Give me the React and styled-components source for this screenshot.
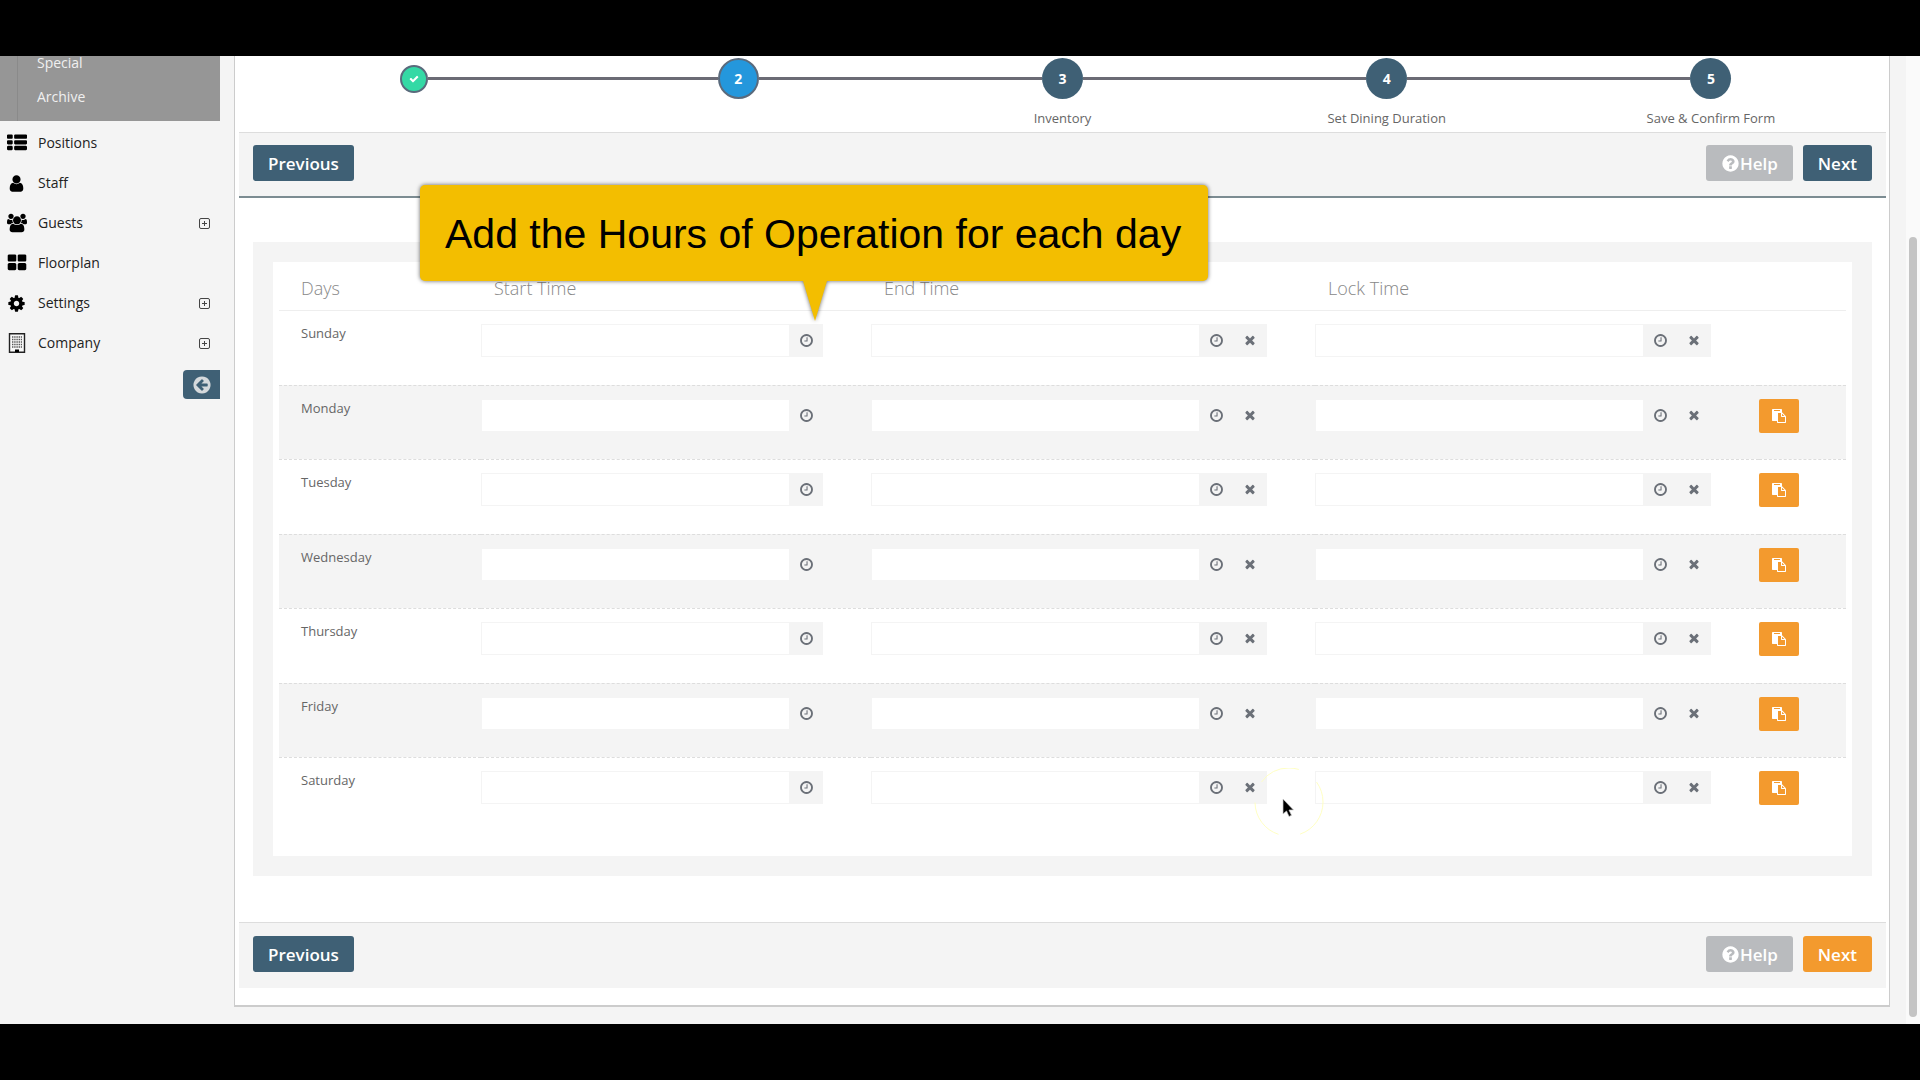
import { Fragment } from "react";
import styled, { createGlobalStyle } from "styled-components";

const CIRCLE =
  "M1664 896q0 209-103 385.5t-279.5 279.5-385.5 103-385.5-103-279.5-279.5-103-385.5 103-385.5 279.5-279.5 385.5-103 385.5 103 279.5 279.5 103 385.5z";

const PATHS = {
  list: "M512 1248v192q0 40-28 68t-68 28h-320q-40 0-68-28t-28-68v-192q0-40 28-68t68-28h320q40 0 68 28t28 68zm0-512v192q0 40-28 68t-68 28h-320q-40 0-68-28t-28-68v-192q0-40 28-68t68-28h320q40 0 68 28t28 68zm1280 512v192q0 40-28 68t-68 28h-960q-40 0-68-28t-28-68v-192q0-40 28-68t68-28h960q40 0 68 28t28 68zm-1280-1024v192q0 40-28 68t-68 28h-320q-40 0-68-28t-28-68v-192q0-40 28-68t68-28h320q40 0 68 28t28 68zm1280 512v192q0 40-28 68t-68 28h-960q-40 0-68-28t-28-68v-192q0-40 28-68t68-28h960q40 0 68 28t28 68zm0-512v192q0 40-28 68t-68 28h-960q-40 0-68-28t-28-68v-192q0-40 28-68t68-28h960q40 0 68 28t28 68z",
  user: "M1536 1399q0 109-62.5 187t-150.5 78h-854q-88 0-150.5-78t-62.5-187q0-85 8.5-160.5t31.5-152 58.5-131 94-89 134.5-34.5q131 128 313 128t313-128q76 0 134.5 34.5t94 89 58.5 131 31.5 152 8.5 160.5zm-256-887q0 159-112.5 271.5t-271.5 112.5-271.5-112.5-112.5-271.5 112.5-271.5 271.5-112.5 271.5 112.5 112.5 271.5z",
  users:
    "M593 896q-162 5-265 128h-134q-82 0-138-40.5t-56-118.5q0-353 124-353 6 0 43.5 21t97.5 42.5 119 21.5q67 0 133-23-5 37-5 66 0 139 81 256zm1071 637q0 120-73 189.5t-194 69.5h-874q-121 0-194-69.5t-73-189.5q0-53 3.5-103.5t14-109 26.5-108.5 43-97.5 62-81 85.5-53.5 111.5-20q10 0 43 21.5t73 48 107 48 135 21.5 135-21.5 107-48 73-48 43-21.5q61 0 111.5 20t85.5 53.5 62 81 43 97.5 26.5 108.5 14 109 3.5 103.5zm-1024-1277q0 106-75 181t-181 75-181-75-75-181 75-181 181-75 181 75 75 181zm704 384q0 159-112.5 271.5t-271.5 112.5-271.5-112.5-112.5-271.5 112.5-271.5 271.5-112.5 271.5 112.5 112.5 271.5zm576 225q0 78-56 118.5t-138 40.5h-134q-103-123-265-128 81-117 81-256 0-29-5-66 66 23 133 23 59 0 119-21.5t97.5-42.5 43.5-21q124 0 124 353zm-128-609q0 106-75 181t-181 75-181-75-75-181 75-181 181-75 181 75 75 181z",
  grid: "M832 1024v384q0 52-38 90t-90 38h-512q-52 0-90-38t-38-90v-384q0-52 38-90t90-38h512q52 0 90 38t38 90zm0-768v384q0 52-38 90t-90 38h-512q-52 0-90-38t-38-90v-384q0-52 38-90t90-38h512q52 0 90 38t38 90zm896 768v384q0 52-38 90t-90 38h-512q-52 0-90-38t-38-90v-384q0-52 38-90t90-38h512q52 0 90 38t38 90zm0-768v384q0 52-38 90t-90 38h-512q-52 0-90-38t-38-90v-384q0-52 38-90t90-38h512q52 0 90 38t38 90z",
  cog: "M1152 896q0-106-75-181t-181-75-181 75-75 181 75 181 181 75 181-75 75-181zm512-109v222q0 12-8 23t-20 13l-185 28q-19 54-39 91 35 50 107 138 10 12 10 25t-9 23q-27 37-99 108t-94 71q-12 0-26-9l-138-108q-44 23-91 38-16 136-29 186-7 28-36 28h-222q-14 0-24.5-8.5t-11.5-21.5l-28-184q-49-16-90-37l-141 107q-10 9-25 9-14 0-25-11-126-114-165-168-7-10-7-23 0-12 8-23 15-21 51-66.5t54-70.5q-27-50-41-99l-183-27q-13-2-21-12.5t-8-23.5v-222q0-12 8-23t19-13l186-28q14-46 39-92-40-57-107-138-10-12-10-24 0-10 9-23 26-36 98.5-107.5t94.5-71.5q13 0 26 10l138 107q44-23 91-38 16-136 29-186 7-28 36-28h222q14 0 24.5 8.5t11.5 21.5l28 184q49 16 90 37l142-107q9-9 24-9 13 0 25 10 129 119 165 170 7 8 7 22 0 12-8 23-15 21-51 66.5t-54 70.5q26 50 41 98l183 28q13 2 21 12.5t8 23.5z",
  clock:
    "M1024 544v448q0 14-9 23t-23 9h-320q-14 0-23-9t-9-23v-64q0-14 9-23t23-9h224v-352q0-14 9-23t23-9h64q14 0 23 9t9 23zm416 352q0-148-73-273t-198-198-273-73-273 73-198 198-73 273 73 273 198 198 273 73 273-73 198-198 73-273z" +
    CIRCLE,
  times:
    "M1490 1322q0 40-28 68l-136 136q-28 28-68 28t-68-28l-294-294-294 294q-28 28-68 28t-68-28l-136-136q-28-28-28-68t28-68l294-294-294-294q-28-28-28-68t28-68l136-136q28-28 68-28t68 28l294 294 294-294q28-28 68-28t68 28l136 136q28 28 28 68t-28 68l-294 294 294 294q28 28 28 68z",
  paste:
    "M768 1664h896v-640h-416q-40 0-68-28t-28-68v-416h-384v1152zm256-1440v-64q0-13-9.5-22.5t-22.5-9.5h-704q-13 0-22.5 9.5t-9.5 22.5v64q0 13 9.5 22.5t22.5 9.5h704q13 0 22.5-9.5t9.5-22.5zm256 672h299l-299-299v299zm512 128v672q0 40-28 68t-68 28h-960q-40 0-68-28t-28-68v-160h-544q-40 0-68-28t-28-68v-1344q0-40 28-68t68-28h1088q40 0 68 28t28 68v328q21 13 36 28l408 408q28 28 48 76t20 88z",
  help:
    "M1024 1376v-192q0-14-9-23t-23-9h-192q-14 0-23 9t-9 23v192q0 14 9 23t23 9h192q14 0 23-9t9-23zm256-672q0-88-55.5-163t-138.5-116-170-41q-243 0-371 213-15 24 8 42l132 100q7 6 19 6 16 0 25-12 53-68 86-92 34-24 86-24 48 0 85.5 26t37.5 59q0 38-20 61t-68 45q-63 28-115.5 86.5t-52.5 125.5v36q0 14 9 23t23 9h192q14 0 23-9t9-23q0-19 21.5-49.5t54.5-49.5q32-18 49-28.5t46-35 44.5-48 28-60.5 12.5-81z" +
    CIRCLE,
  back:
    "M1408 960v-128q0-26-19-45t-45-19h-502l189-189q19-19 19-45t-19-45l-91-91q-18-18-45-18t-45 18l-362 362-91 91q-18 18-18 45t18 45l91 91 362 362q18 18 45 18t45-18l91-91q18-18 18-45t-18-45l-189-189h502q26 0 45-19t19-45z" +
    CIRCLE,
  check:
    "M1671 566q0 40-28 68l-724 724-136 136q-28 28-68 28t-68-28l-136-136-362-362q-28-28-28-68t28-68l136-136q28-28 68-28t68 28l294 295 656-657q28-28 68-28t68 28l136 136q28 28 28 68z",
};

const Icon = ({ name, size }) => (
  <svg
    width={size}
    height={size}
    viewBox={name === "users" ? "0 0 1920 1792" : "0 0 1792 1792"}
    fill="currentColor"
    fillRule="evenodd"
    aria-hidden="true"
  >
    <path d={PATHS[name]} />
  </svg>
);

const BuildingIcon = () => (
  <svg width="18" height="20" viewBox="0 0 18 20" aria-hidden="true">
    <path d="M1.500 0.700h15v18.600h-15z" fill="#f8f8f8" stroke="#222" strokeWidth="1.400" />
    <path
      d="M4 4h10M4 6.500h10M4 9h10M4 11.500h10M4 14h10"
      stroke="#555"
      strokeWidth="1.400"
      strokeDasharray="1.400 0.800"
    />
    <path d="M7 16.500h4V19H7z" fill="#000" />
  </svg>
);

const ExpandIcon = () => (
  <svg width="11" height="11" viewBox="0 0 11 11" fill="none" stroke="#444">
    <rect x="0.500" y="0.500" width="10" height="10" rx="1.500" />
    <path d="M5.500 3v5M3 5.500h5" />
  </svg>
);

const menu = [
  { label: "Positions", icon: "list", size: 20 },
  { label: "Staff", icon: "user", size: 19 },
  { label: "Guests", icon: "users", size: 20, expand: true },
  { label: "Floorplan", icon: "grid", size: 20 },
  { label: "Settings", icon: "cog", size: 19, expand: true },
  { label: "Company", expand: true },
];

const steps = [
  { state: "done" },
  { number: 2, state: "active" },
  { number: 3, label: "Inventory" },
  { number: 4, label: "Set Dining Duration" },
  { number: 5, label: "Save & Confirm Form" },
];

const days = [
  "Sunday",
  "Monday",
  "Tuesday",
  "Wednesday",
  "Thursday",
  "Friday",
  "Saturday",
];

const Sidebar = () => (
  <Side>
    <SubMenu>
      <SubLink href="#special">Special</SubLink>
      <SubLink href="#archive">Archive</SubLink>
    </SubMenu>
    <Menu>
      {menu.map(({ label, icon, size, expand }) => (
        <MenuLink key={label} href={`#${label.toLowerCase()}`}>
          <MenuIcon>
            {icon ? <Icon name={icon} size={size} /> : <BuildingIcon />}
          </MenuIcon>
          <MenuLabel>{label}</MenuLabel>
          {expand && <ExpandIcon />}
        </MenuLink>
      ))}
    </Menu>
    <Collapse type="button" aria-label="Collapse menu">
      <Icon name="back" size={20} />
    </Collapse>
  </Side>
);

const Stepper = () => (
  <Steps>
    {steps.map(({ number, label, state }, i) => (
      <Step key={i}>
        <StepTrack>
          <StepLine $hidden={i === 0} />
          <StepDot $state={state}>
            {number || <Icon name="check" size={10} />}
          </StepDot>
          <StepLine $hidden={i === steps.length - 1} />
        </StepTrack>
        {label && <StepLabel>{label}</StepLabel>}
      </Step>
    ))}
  </Steps>
);

const Actions = ({ bottom }) => (
  <Toolbar $bottom={bottom}>
    <Button type="button">Previous</Button>
    <ButtonGroup>
      <Button type="button" $color="#b9bbbe">
        <Icon name="help" size={19} />
        Help
      </Button>
      <Button type="button" $color={bottom && "#f39a2e"}>
        Next
      </Button>
    </ButtonGroup>
  </Toolbar>
);

const TimeField = ({ label, clearable }) => (
  <Field>
    <TimeInput type="text" aria-label={label} />
    <Addon>
      <AddonButton type="button" aria-label={`Pick ${label}`}>
        <Icon name="clock" size={15} />
      </AddonButton>
      {clearable && (
        <AddonButton type="button" aria-label={`Clear ${label}`}>
          <Icon name="times" size={14} />
        </AddonButton>
      )}
    </Addon>
  </Field>
);

const HoursTable = () => (
  <Table>
    <colgroup>
      <Col $width={202} />
      <Col $width={390} />
      <Col />
      <Col />
      <Col $width={87} />
    </colgroup>
    <thead>
      <tr>
        <Head $first>Days</Head>
        <Head>Start Time</Head>
        <Head>End Time</Head>
        <Head>Lock Time</Head>
        <Head as="td" />
      </tr>
    </thead>
    <tbody>
      {days.map((day, i) => (
        <Row key={day}>
          <DayName scope="row">{day}</DayName>
          <Cell>
            <TimeField label={`${day} start time`} />
          </Cell>
          <Cell>
            <TimeField label={`${day} end time`} clearable />
          </Cell>
          <Cell>
            <TimeField label={`${day} lock time`} clearable />
          </Cell>
          <Cell>
            {i > 0 && (
              <CopyButton type="button" aria-label={`Copy to ${day}`}>
                <Icon name="paste" size={14} />
              </CopyButton>
            )}
          </Cell>
        </Row>
      ))}
    </tbody>
  </Table>
);

const App = () => {
  return (
    <Fragment>
      <GlobalStyle />
      <Page>
        <Sidebar />
        <Main>
          <Panel>
            <Stepper />
            <Actions />
            <Frame>
              <HoursTable />
            </Frame>
            <Actions bottom />
          </Panel>
        </Main>
        <ScrollTrack>
          <ScrollThumb />
        </ScrollTrack>
        <Callout>Add the Hours of Operation for each day</Callout>
        <Pointer>
          <svg width="72" height="72" viewBox="0 0 72 72">
            <circle
              cx="36"
              cy="34"
              r="34"
              fill="none"
              stroke="#ffffc4"
              strokeDasharray="42 22"
            />
            <path
              d="M30 31v15l3.500-3 2.500 5.500 2.500-1.200-2.500-5.300h4.500z"
              fill="#000"
              stroke="#ccc"
              strokeWidth="0.700"
            />
          </svg>
        </Pointer>
      </Page>
    </Fragment>
  );
};

const GlobalStyle = createGlobalStyle`
  * {
    box-sizing: border-box;
  }
  body {
    margin: 0;
    background: #000;
    font-family: "Open Sans", "Noto Sans", sans-serif;
    font-size: 14px;
    line-height: 20px;
    color: #666;
  }
  button, input {
    font-family: inherit;
  }
  svg {
    display: block;
    flex: none;
  }
`;

const Page = styled.div`
  position: relative;
  display: flex;
  min-height: 100vh;
  border: solid #000;
  border-width: 56px 0;
  background: #f4f4f4;
`;
const Side = styled.aside`
  width: 220px;
  display: flex;
  flex-direction: column;
`;
const SubMenu = styled.nav`
  display: flex;
  flex-direction: column;
  height: 65px;
  padding-left: 17px;
  background: #969696;
`;
const SubLink = styled.a`
  flex: none;
  height: 34px;
  padding-left: 19px;
  border-left: 1px solid #8a8a8a;
  line-height: 14px;
  color: #f0f0f0;
  text-decoration: none;
  &:last-child {
    height: 31px;
  }
`;
const Menu = styled.nav`
  padding: 2px 0 7px;
`;
const MenuLink = styled.a`
  display: flex;
  align-items: center;
  height: 40px;
  padding: 0 10px 0 6px;
  color: #000;
  text-decoration: none;
`;
const MenuIcon = styled.span`
  display: flex;
  justify-content: center;
  width: 21px;
  margin-right: 11px;
`;
const MenuLabel = styled.span`
  flex: 1;
  color: #222;
`;
const Collapse = styled.button`
  display: flex;
  align-items: center;
  justify-content: center;
  align-self: flex-end;
  width: 37px;
  height: 29px;
  padding: 0;
  border: none;
  border-radius: 4px 0 0 4px;
  background: #3f6075;
  color: #d5d9dc;
`;
const Main = styled.main`
  flex: 1;
  padding: 0 16px 17px 14px;
`;
const Panel = styled.section`
  padding: 0 3px 17px 4px;
  border: solid #ccc;
  border-width: 0 1px 2px;
  background: #fff;
`;
const Steps = styled.ol`
  display: flex;
  height: 76px;
  margin: 0;
  padding: 2px 13px 0;
  list-style: none;
`;
const Step = styled.li`
  flex: 1;
`;
const StepTrack = styled.div`
  display: flex;
  align-items: center;
  height: 41px;
`;
const StepLine = styled.span`
  flex: 1;
  height: 3px;
  background: ${({ $hidden }) => ($hidden ? "transparent" : "#6b6b75")};
`;
const dotColors = { done: "#34d9a5", active: "#2497dc" };
const StepDot = styled.span`
  display: flex;
  align-items: center;
  justify-content: center;
  width: ${({ $state }) => ($state === "done" ? 28 : 41)}px;
  height: ${({ $state }) => ($state === "done" ? 28 : 41)}px;
  border: ${({ $state }) => ($state ? "2px solid #5a6a7c" : "none")};
  border-radius: 50%;
  background: ${({ $state }) => dotColors[$state] || "#3f6075"};
  color: #fff;
  font-weight: 700;
`;
const StepLabel = styled.div`
  margin-top: 9px;
  font-size: 13px;
  text-align: center;
`;
const Toolbar = styled.div`
  display: flex;
  align-items: flex-start;
  justify-content: space-between;
  height: 66px;
  padding: ${({ $bottom }) => ($bottom ? 13 : 12)}px 14px 0;
  border-top: 1px solid #ddd;
  border-bottom: ${({ $bottom }) => ($bottom ? "none" : "2px solid #7c8c92")};
  background: #f4f4f4;
`;
const ButtonGroup = styled.div`
  display: flex;
  gap: 10px;
`;
const Button = styled.button`
  display: flex;
  align-items: center;
  height: 36px;
  padding: 0 15px;
  border: none;
  border-radius: 3px;
  background: ${({ $color }) => $color || "#3f6075"};
  color: #fff;
  font-size: 17px;
  font-weight: 600;
`;
const Frame = styled.div`
  margin: 44px 14px 46px;
  padding: 0 6px 24px;
  border: 20px solid #f4f4f4;
`;
const Table = styled.table`
  width: 100%;
  table-layout: fixed;
  border-collapse: collapse;
`;
const Col = styled.col`
  width: ${({ $width }) => ($width ? `${$width}px` : "auto")};
`;
const Head = styled.th`
  height: 48px;
  padding: 5px 0 0 ${({ $first }) => ($first ? 22 : 13)}px;
  color: #888;
  font-size: 18px;
  font-weight: 300;
  text-align: left;
`;
const Row = styled.tr`
  height: 75px;
  border-top: 1px dashed #ddd;
  &:first-child {
    border-top: 1px solid #eee;
  }
  &:nth-child(even) {
    height: 74px;
    background: #f4f4f4;
  }
`;
const DayName = styled.th`
  padding: 12px 0 0 22px;
  font-size: 13px;
  font-weight: 400;
  text-align: left;
  vertical-align: top;
`;
const Cell = styled.td`
  padding: 13px 0 0;
  vertical-align: top;
`;
const Field = styled.div`
  display: flex;
  height: 33px;
  margin-right: 48px;
`;
const TimeInput = styled.input`
  flex: 1;
  min-width: 0;
  padding: 0 8px;
  border: 1px solid #f4f4f4;
  border-right: none;
  background: #fff;
`;
const Addon = styled.div`
  display: flex;
  background: #f4f4f4;
`;
const AddonButton = styled.button`
  display: flex;
  align-items: center;
  justify-content: center;
  width: 34px;
  padding: 0;
  border: none;
  background: none;
  color: #6b7078;
`;
const CopyButton = styled.button`
  display: flex;
  align-items: center;
  justify-content: center;
  width: 40px;
  height: 34px;
  padding: 0;
  border: none;
  border-radius: 2px;
  background: #f39a2e;
  color: #fff;
`;
const ScrollTrack = styled.div`
  display: flex;
  width: 14px;
  padding: 181px 3px 7px;
  background: #fafafa;
`;
const ScrollThumb = styled.div`
  flex: 1;
  border-radius: 4px;
  background: #c4c4c4;
`;
const Callout = styled.div`
  position: absolute;
  top: 129px;
  left: 420px;
  padding: 25px 27px 23px 25px;
  border-radius: 5px;
  background: #f3be00;
  color: #000;
  font-family: "Liberation Sans", Arial, sans-serif;
  font-size: 41px;
  line-height: 48px;
  white-space: nowrap;
  filter: drop-shadow(0 0 2px rgba(0, 0, 0, 0.6));
  &::after {
    content: "";
    position: absolute;
    top: 100%;
    left: 383px;
    border: solid transparent;
    border-width: 40px 12px 0;
    border-top-color: #f3be00;
  }
`;
const Pointer = styled.div`
  position: absolute;
  top: 712px;
  left: 1253px;
  pointer-events: none;
`;

export default App;
